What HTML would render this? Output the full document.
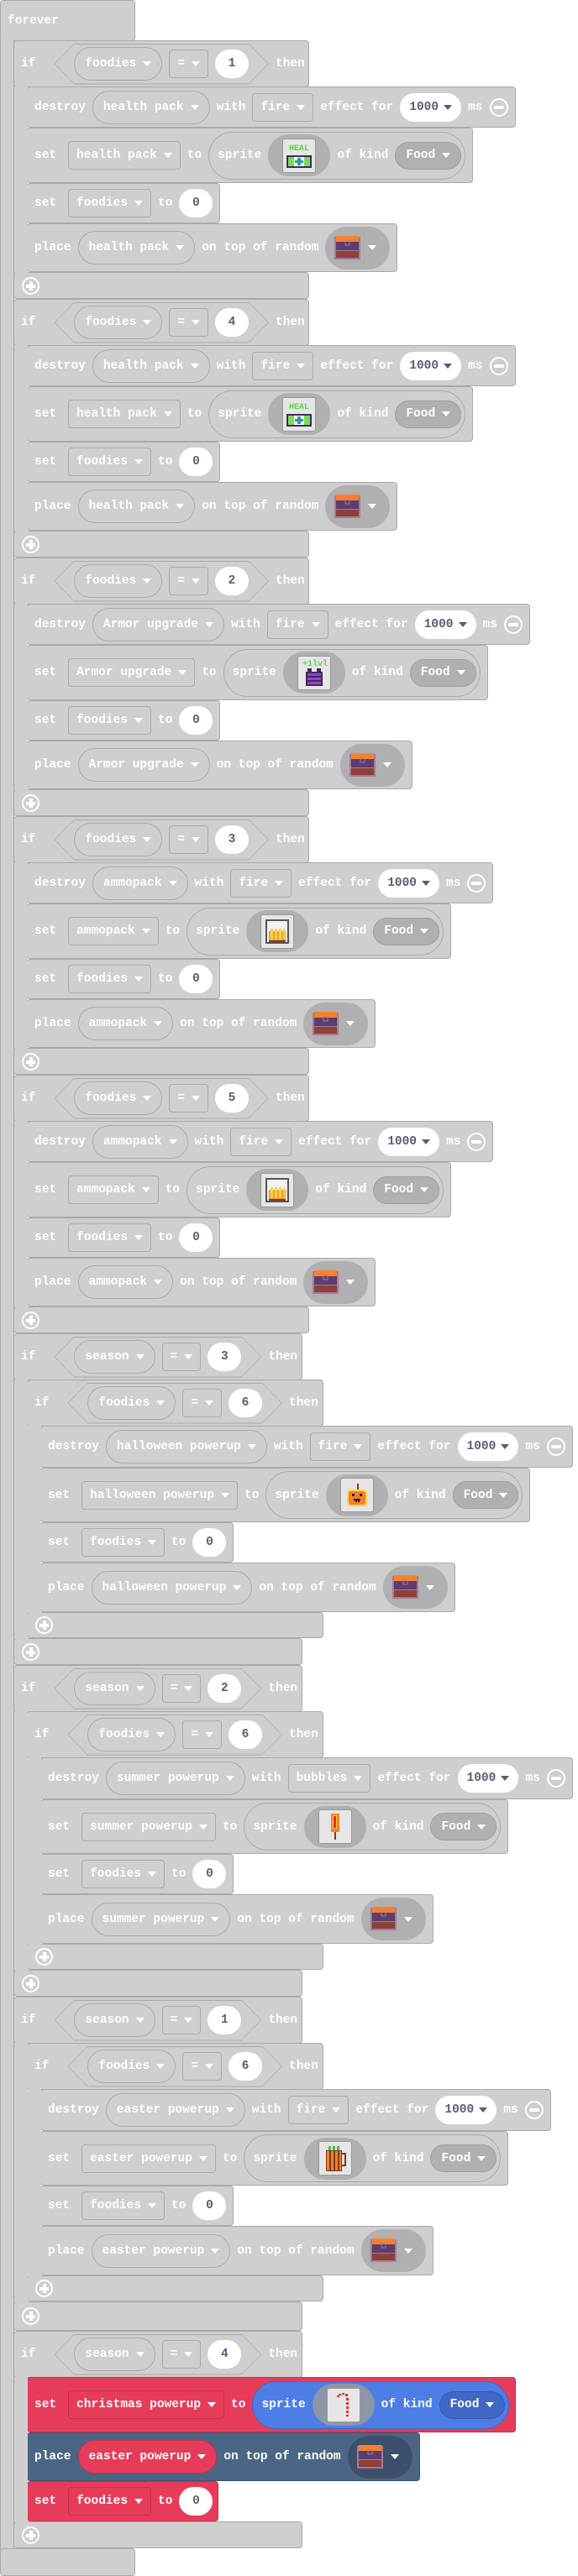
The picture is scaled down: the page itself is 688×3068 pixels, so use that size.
<!DOCTYPE html>
<html><head><meta charset="utf-8">
<style>
body{margin:0;width:688px;height:3068px;position:relative;background:#fff;overflow:hidden;font:bold 14.5px "Liberation Mono",monospace;color:#fff}
.g{position:absolute;background:#cfcfcf;border:1px solid #a9a9a9;box-sizing:border-box;border-radius:4px}
.sp1{border-top:none;border-bottom:none;border-radius:0;border-right:none}
.r{position:absolute;display:flex;align-items:center;gap:8px;padding:0 8px;box-sizing:border-box;background:#cfcfcf;border:1px solid #a9a9a9;border-radius:4px;white-space:nowrap}
.p{display:flex;align-items:center;gap:8px;height:40px;padding:0 12px;border:1px solid #a9a9a9;border-radius:20px;box-sizing:border-box}
.d{display:flex;align-items:center;gap:8px;height:34px;padding:0 9px;border:1px solid #a9a9a9;border-radius:4px;box-sizing:border-box}
.sv{margin-left:6px}
.n{display:flex;align-items:center;justify-content:center;gap:6px;height:34px;min-width:40px;padding:0 11px;background:#fff;color:#575e75;border-radius:17px;box-sizing:border-box}
.a{width:0;height:0;border-left:5px solid transparent;border-right:5px solid transparent;border-top:6px solid #fff}
.n .a{border-top-color:#575e75}
.m{width:22px;height:22px;border:2px solid #fff;border-radius:50%;box-sizing:border-box;position:relative}
.m::after{content:"";position:absolute;left:3px;right:3px;top:7px;height:4px;background:#fff;border-radius:2px}
.s{display:flex;align-items:center;gap:8px;height:57px;padding:0 4px 0 10px;border:1px solid #a9a9a9;border-radius:29px;box-sizing:border-box}
.h{display:flex;align-items:center;justify-content:center;width:74px;height:50px;border-radius:25px;background:#b0b0b0}
.ic{width:40px;height:41px;background:#e6e6e6;border:1px solid #999;border-radius:3px;box-sizing:border-box;display:flex;align-items:center;justify-content:center}
.fk{display:flex;align-items:center;gap:8px;height:33px;padding:0 12px;background:#b0b0b0;border:1px solid #9d9d9d;border-radius:17px;box-sizing:border-box}
.ch{display:flex;align-items:center;gap:8px;width:77px;height:51px;padding-left:10px;border-radius:26px;background:#b0b0b0;box-sizing:border-box}
.hx{position:relative;z-index:0;display:flex;align-items:center;gap:8px;height:49px;padding:0 24px}
.hx::before,.hx::after{content:"";position:absolute;inset:0;clip-path:polygon(24px 0,calc(100% - 24px) 0,100% 50%,calc(100% - 24px) 100%,24px 100%,0 50%);z-index:-1}
.hx::before{background:#a9a9a9}
.hx::after{inset:1px;background:#cfcfcf;clip-path:polygon(23px 0,calc(100% - 23px) 0,100% 50%,calc(100% - 23px) 100%,23px 100%,0 50%)}
.pl{position:absolute;width:21px;height:21px;border:2px solid #fff;border-radius:50%;box-sizing:border-box}
.pl::before{content:"";position:absolute;left:3px;right:3px;top:6.5px;height:4px;background:#fff}
.pl::after{content:"";position:absolute;top:3px;bottom:3px;left:6.5px;width:4px;background:#fff}
.red{background:#e63c5a;border-color:#c4304b}
.red .d{border-color:#c4304b}
.blue{background:#4d7ee6;border-color:#3e67c4}
.blue .h{background:#8d96a6}
.blue .fk{background:#3f67c6;border-color:#3558b0}
.dk{background:#4b6585;border-color:#3e5470}
.dk .p{background:#e63c5a;border-color:#c4304b}
.dk .ch{background:#3d506b}
</style></head><body>

<!-- forever -->
<div class="r" style="left:0;top:0;width:161px;height:49px">forever</div>
<div class="g" style="left:0;top:47px;width:17px;height:2990px;border-top:none;border-bottom:none;border-radius:0"></div>
<div class="g" style="left:0;top:3035px;width:161px;height:33px"></div>

<!-- ===== foodies block 1 (T=48) ===== -->
<div class="r" style="left:16px;top:48px;width:352px;height:56px">if<div class="hx" style="margin-left:14px"><div class="p">foodies<i class="a"></i></div><div class="d">=<i class="a"></i></div><div class="n">1</div></div>then</div>
<div class="r" style="left:32px;top:103px;height:49px">destroy<div class="p">health pack<i class="a"></i></div>with<div class="d">fire<i class="a"></i></div>effect for<div class="n">1000<i class="a"></i></div>ms<div class="m"></div></div>
<div class="r" style="left:32px;top:152px;height:66px">set<div class="d sv">health pack<i class="a"></i></div>to<div class="s">sprite<div class="h"><div class="ic"><svg width="32" height="35" viewBox="0 0 32 35"><text x="16" y="11" font-family="Liberation Mono" font-size="10" font-weight="bold" fill="#5ad442" text-anchor="middle">HEAL</text><rect x="1" y="17" width="30" height="15" fill="#3f2a5c"/><rect x="3" y="19" width="26" height="11" fill="#7ed957"/><rect x="10" y="19" width="12" height="11" fill="#fff"/><rect x="14" y="20" width="4" height="9" fill="#2a9d9d"/><rect x="11" y="23" width="10" height="3" fill="#2a9d9d"/></svg></div></div>of kind<div class="fk">Food<i class="a"></i></div></div></div>
<div class="r" style="left:32px;top:218px;height:48px">set<div class="d sv">foodies<i class="a"></i></div>to<div class="n">0</div></div>
<div class="r" style="left:32px;top:266px;height:58px">place<div class="p">health pack<i class="a"></i></div>on top of random<div class="ch"><svg width="33" height="31" viewBox="0 0 33 31"><rect x="1" y="2" width="31" height="27" fill="#a27b9c"/><rect x="3" y="1" width="27" height="7" fill="#f7802c"/><rect x="3" y="8" width="27" height="10" fill="#5b3d6f"/><rect x="3" y="19" width="27" height="8" fill="#903f36"/><rect x="14" y="7" width="5" height="5" fill="none" stroke="#a27b9c"/></svg><i class="a"></i></div></div>
<div class="g" style="left:16px;top:324px;width:352px;height:32px"></div>
<div class="g sp1" style="left:16px;top:103px;width:17px;height:222px"></div>
<div class="pl" style="left:26px;top:330px"></div>

<!-- ===== foodies block 2 (T=356) ===== -->
<div class="r" style="left:16px;top:356px;width:352px;height:56px">if<div class="hx" style="margin-left:14px"><div class="p">foodies<i class="a"></i></div><div class="d">=<i class="a"></i></div><div class="n">4</div></div>then</div>
<div class="r" style="left:32px;top:411px;height:49px">destroy<div class="p">health pack<i class="a"></i></div>with<div class="d">fire<i class="a"></i></div>effect for<div class="n">1000<i class="a"></i></div>ms<div class="m"></div></div>
<div class="r" style="left:32px;top:460px;height:66px">set<div class="d sv">health pack<i class="a"></i></div>to<div class="s">sprite<div class="h"><div class="ic"><svg width="32" height="35" viewBox="0 0 32 35"><text x="16" y="11" font-family="Liberation Mono" font-size="10" font-weight="bold" fill="#5ad442" text-anchor="middle">HEAL</text><rect x="1" y="17" width="30" height="15" fill="#3f2a5c"/><rect x="3" y="19" width="26" height="11" fill="#7ed957"/><rect x="10" y="19" width="12" height="11" fill="#fff"/><rect x="14" y="20" width="4" height="9" fill="#2a9d9d"/><rect x="11" y="23" width="10" height="3" fill="#2a9d9d"/></svg></div></div>of kind<div class="fk">Food<i class="a"></i></div></div></div>
<div class="r" style="left:32px;top:526px;height:48px">set<div class="d sv">foodies<i class="a"></i></div>to<div class="n">0</div></div>
<div class="r" style="left:32px;top:574px;height:58px">place<div class="p">health pack<i class="a"></i></div>on top of random<div class="ch"><svg width="33" height="31" viewBox="0 0 33 31"><rect x="1" y="2" width="31" height="27" fill="#a27b9c"/><rect x="3" y="1" width="27" height="7" fill="#f7802c"/><rect x="3" y="8" width="27" height="10" fill="#5b3d6f"/><rect x="3" y="19" width="27" height="8" fill="#903f36"/><rect x="14" y="7" width="5" height="5" fill="none" stroke="#a27b9c"/></svg><i class="a"></i></div></div>
<div class="g" style="left:16px;top:632px;width:352px;height:32px"></div>
<div class="g sp1" style="left:16px;top:411px;width:17px;height:222px"></div>
<div class="pl" style="left:26px;top:638px"></div>

<!-- ===== foodies block 3 (T=664) ===== -->
<div class="r" style="left:16px;top:664px;width:352px;height:56px">if<div class="hx" style="margin-left:14px"><div class="p">foodies<i class="a"></i></div><div class="d">=<i class="a"></i></div><div class="n">2</div></div>then</div>
<div class="r" style="left:32px;top:719px;height:49px">destroy<div class="p">Armor upgrade<i class="a"></i></div>with<div class="d">fire<i class="a"></i></div>effect for<div class="n">1000<i class="a"></i></div>ms<div class="m"></div></div>
<div class="r" style="left:32px;top:768px;height:66px">set<div class="d sv">Armor upgrade<i class="a"></i></div>to<div class="s">sprite<div class="h"><div class="ic"><svg width="32" height="36" viewBox="0 0 32 36"><text x="17" y="10" font-family="Liberation Mono" font-size="10" font-weight="bold" fill="#5ad442" text-anchor="middle">+1lvl</text><rect x="8" y="13" width="5" height="5" fill="#3f2a5c"/><rect x="19" y="13" width="5" height="5" fill="#3f2a5c"/><rect x="6" y="17" width="20" height="17" fill="#3f2a5c"/><rect x="8" y="19" width="16" height="3" fill="#9b3fd0"/><rect x="8" y="24" width="16" height="3" fill="#9b3fd0"/><rect x="8" y="29" width="16" height="3" fill="#9b3fd0"/></svg></div></div>of kind<div class="fk">Food<i class="a"></i></div></div></div>
<div class="r" style="left:32px;top:834px;height:48px">set<div class="d sv">foodies<i class="a"></i></div>to<div class="n">0</div></div>
<div class="r" style="left:32px;top:882px;height:58px">place<div class="p">Armor upgrade<i class="a"></i></div>on top of random<div class="ch"><svg width="33" height="31" viewBox="0 0 33 31"><rect x="1" y="2" width="31" height="27" fill="#a27b9c"/><rect x="3" y="1" width="27" height="7" fill="#f7802c"/><rect x="3" y="8" width="27" height="10" fill="#5b3d6f"/><rect x="3" y="19" width="27" height="8" fill="#903f36"/><rect x="14" y="7" width="5" height="5" fill="none" stroke="#a27b9c"/></svg><i class="a"></i></div></div>
<div class="g" style="left:16px;top:940px;width:352px;height:32px"></div>
<div class="g sp1" style="left:16px;top:719px;width:17px;height:222px"></div>
<div class="pl" style="left:26px;top:946px"></div>

<!-- ===== foodies block 4 (T=972) ===== -->
<div class="r" style="left:16px;top:972px;width:352px;height:56px">if<div class="hx" style="margin-left:14px"><div class="p">foodies<i class="a"></i></div><div class="d">=<i class="a"></i></div><div class="n">3</div></div>then</div>
<div class="r" style="left:32px;top:1027px;height:49px">destroy<div class="p">ammopack<i class="a"></i></div>with<div class="d">fire<i class="a"></i></div>effect for<div class="n">1000<i class="a"></i></div>ms<div class="m"></div></div>
<div class="r" style="left:32px;top:1076px;height:66px">set<div class="d sv">ammopack<i class="a"></i></div>to<div class="s">sprite<div class="h"><div class="ic"><svg width="32" height="34" viewBox="0 0 32 34"><rect x="3" y="4" width="26" height="27" fill="#f2f2f2" stroke="#555" stroke-width="2"/><rect x="6" y="17" width="20" height="12" fill="#f59a2c"/><rect x="8" y="14" width="3" height="13" fill="#f7d44c"/><rect x="13" y="14" width="3" height="13" fill="#f7d44c"/><rect x="18" y="14" width="3" height="13" fill="#f7d44c"/><rect x="23" y="14" width="2" height="13" fill="#f7d44c"/><rect x="6" y="28" width="20" height="2" fill="#7a3b1f"/></svg></div></div>of kind<div class="fk">Food<i class="a"></i></div></div></div>
<div class="r" style="left:32px;top:1142px;height:48px">set<div class="d sv">foodies<i class="a"></i></div>to<div class="n">0</div></div>
<div class="r" style="left:32px;top:1190px;height:58px">place<div class="p">ammopack<i class="a"></i></div>on top of random<div class="ch"><svg width="33" height="31" viewBox="0 0 33 31"><rect x="1" y="2" width="31" height="27" fill="#a27b9c"/><rect x="3" y="1" width="27" height="7" fill="#f7802c"/><rect x="3" y="8" width="27" height="10" fill="#5b3d6f"/><rect x="3" y="19" width="27" height="8" fill="#903f36"/><rect x="14" y="7" width="5" height="5" fill="none" stroke="#a27b9c"/></svg><i class="a"></i></div></div>
<div class="g" style="left:16px;top:1248px;width:352px;height:32px"></div>
<div class="g sp1" style="left:16px;top:1027px;width:17px;height:222px"></div>
<div class="pl" style="left:26px;top:1254px"></div>

<!-- ===== foodies block 5 (T=1280) ===== -->
<div class="r" style="left:16px;top:1280px;width:352px;height:56px">if<div class="hx" style="margin-left:14px"><div class="p">foodies<i class="a"></i></div><div class="d">=<i class="a"></i></div><div class="n">5</div></div>then</div>
<div class="r" style="left:32px;top:1335px;height:49px">destroy<div class="p">ammopack<i class="a"></i></div>with<div class="d">fire<i class="a"></i></div>effect for<div class="n">1000<i class="a"></i></div>ms<div class="m"></div></div>
<div class="r" style="left:32px;top:1384px;height:66px">set<div class="d sv">ammopack<i class="a"></i></div>to<div class="s">sprite<div class="h"><div class="ic"><svg width="32" height="34" viewBox="0 0 32 34"><rect x="3" y="4" width="26" height="27" fill="#f2f2f2" stroke="#555" stroke-width="2"/><rect x="6" y="17" width="20" height="12" fill="#f59a2c"/><rect x="8" y="14" width="3" height="13" fill="#f7d44c"/><rect x="13" y="14" width="3" height="13" fill="#f7d44c"/><rect x="18" y="14" width="3" height="13" fill="#f7d44c"/><rect x="23" y="14" width="2" height="13" fill="#f7d44c"/><rect x="6" y="28" width="20" height="2" fill="#7a3b1f"/></svg></div></div>of kind<div class="fk">Food<i class="a"></i></div></div></div>
<div class="r" style="left:32px;top:1450px;height:48px">set<div class="d sv">foodies<i class="a"></i></div>to<div class="n">0</div></div>
<div class="r" style="left:32px;top:1498px;height:58px">place<div class="p">ammopack<i class="a"></i></div>on top of random<div class="ch"><svg width="33" height="31" viewBox="0 0 33 31"><rect x="1" y="2" width="31" height="27" fill="#a27b9c"/><rect x="3" y="1" width="27" height="7" fill="#f7802c"/><rect x="3" y="8" width="27" height="10" fill="#5b3d6f"/><rect x="3" y="19" width="27" height="8" fill="#903f36"/><rect x="14" y="7" width="5" height="5" fill="none" stroke="#a27b9c"/></svg><i class="a"></i></div></div>
<div class="g" style="left:16px;top:1556px;width:352px;height:32px"></div>
<div class="g sp1" style="left:16px;top:1335px;width:17px;height:222px"></div>
<div class="pl" style="left:26px;top:1562px"></div>

<!-- ===== season block 3 (S=1588) ===== -->
<div class="r" style="left:16px;top:1588px;width:344px;height:56px">if<div class="hx" style="margin-left:14px"><div class="p">season<i class="a"></i></div><div class="d">=<i class="a"></i></div><div class="n">3</div></div>then</div>
<div class="r" style="left:32px;top:1643px;width:353px;height:56px">if<div class="hx" style="margin-left:14px"><div class="p">foodies<i class="a"></i></div><div class="d">=<i class="a"></i></div><div class="n">6</div></div>then</div>
<div class="r" style="left:48px;top:1698px;height:50px">destroy<div class="p">halloween powerup<i class="a"></i></div>with<div class="d">fire<i class="a"></i></div>effect for<div class="n">1000<i class="a"></i></div>ms<div class="m"></div></div>
<div class="r" style="left:48px;top:1748px;height:65px">set<div class="d sv">halloween powerup<i class="a"></i></div>to<div class="s">sprite<div class="h"><div class="ic"><svg width="32" height="34" viewBox="0 0 32 34"><rect x="16" y="3" width="2" height="7" fill="#7a3b1f"/><rect x="4" y="10" width="24" height="20" rx="4" fill="#f7d44c"/><rect x="6" y="12" width="20" height="16" rx="3" fill="#f5802a"/><rect x="10" y="15" width="3" height="3" fill="#222"/><rect x="19" y="15" width="3" height="3" fill="#222"/><rect x="12" y="21" width="8" height="2" fill="#222"/><rect x="14" y="23" width="2" height="2" fill="#222"/><rect x="17" y="23" width="2" height="2" fill="#222"/></svg></div></div>of kind<div class="fk">Food<i class="a"></i></div></div></div>
<div class="r" style="left:48px;top:1813px;height:48px">set<div class="d sv">foodies<i class="a"></i></div>to<div class="n">0</div></div>
<div class="r" style="left:48px;top:1861px;height:59px">place<div class="p">halloween powerup<i class="a"></i></div>on top of random<div class="ch"><svg width="33" height="31" viewBox="0 0 33 31"><rect x="1" y="2" width="31" height="27" fill="#a27b9c"/><rect x="3" y="1" width="27" height="7" fill="#f7802c"/><rect x="3" y="8" width="27" height="10" fill="#5b3d6f"/><rect x="3" y="19" width="27" height="8" fill="#903f36"/><rect x="14" y="7" width="5" height="5" fill="none" stroke="#a27b9c"/></svg><i class="a"></i></div></div>
<div class="g" style="left:32px;top:1920px;width:353px;height:31px"></div>
<div class="g sp1" style="left:32px;top:1698px;width:17px;height:223px"></div>
<div class="pl" style="left:42px;top:1925px"></div>
<div class="g" style="left:16px;top:1951px;width:344px;height:32px"></div>
<div class="g sp1" style="left:16px;top:1643px;width:17px;height:309px"></div>
<div class="pl" style="left:26px;top:1957px"></div>

<!-- ===== season block 2 (S=1983) ===== -->
<div class="r" style="left:16px;top:1983px;width:344px;height:56px">if<div class="hx" style="margin-left:14px"><div class="p">season<i class="a"></i></div><div class="d">=<i class="a"></i></div><div class="n">2</div></div>then</div>
<div class="r" style="left:32px;top:2038px;width:353px;height:56px">if<div class="hx" style="margin-left:14px"><div class="p">foodies<i class="a"></i></div><div class="d">=<i class="a"></i></div><div class="n">6</div></div>then</div>
<div class="r" style="left:48px;top:2093px;height:50px">destroy<div class="p">summer powerup<i class="a"></i></div>with<div class="d">bubbles<i class="a"></i></div>effect for<div class="n">1000<i class="a"></i></div>ms<div class="m"></div></div>
<div class="r" style="left:48px;top:2143px;height:65px">set<div class="d sv">summer powerup<i class="a"></i></div>to<div class="s">sprite<div class="h"><div class="ic"><svg width="32" height="36" viewBox="0 0 32 36"><rect x="11" y="2" width="10" height="22" fill="#f5802a"/><rect x="13" y="4" width="5" height="16" fill="#f7d44c"/><rect x="14" y="5" width="3" height="14" fill="#e0302a"/><rect x="15" y="24" width="2" height="9" fill="#7a3b1f"/></svg></div></div>of kind<div class="fk">Food<i class="a"></i></div></div></div>
<div class="r" style="left:48px;top:2208px;height:48px">set<div class="d sv">foodies<i class="a"></i></div>to<div class="n">0</div></div>
<div class="r" style="left:48px;top:2256px;height:59px">place<div class="p">summer powerup<i class="a"></i></div>on top of random<div class="ch"><svg width="33" height="31" viewBox="0 0 33 31"><rect x="1" y="2" width="31" height="27" fill="#a27b9c"/><rect x="3" y="1" width="27" height="7" fill="#f7802c"/><rect x="3" y="8" width="27" height="10" fill="#5b3d6f"/><rect x="3" y="19" width="27" height="8" fill="#903f36"/><rect x="14" y="7" width="5" height="5" fill="none" stroke="#a27b9c"/></svg><i class="a"></i></div></div>
<div class="g" style="left:32px;top:2315px;width:353px;height:31px"></div>
<div class="g sp1" style="left:32px;top:2093px;width:17px;height:223px"></div>
<div class="pl" style="left:42px;top:2320px"></div>
<div class="g" style="left:16px;top:2346px;width:344px;height:32px"></div>
<div class="g sp1" style="left:16px;top:2038px;width:17px;height:309px"></div>
<div class="pl" style="left:26px;top:2352px"></div>

<!-- ===== season block 1 (S=2378) ===== -->
<div class="r" style="left:16px;top:2378px;width:344px;height:56px">if<div class="hx" style="margin-left:14px"><div class="p">season<i class="a"></i></div><div class="d">=<i class="a"></i></div><div class="n">1</div></div>then</div>
<div class="r" style="left:32px;top:2433px;width:353px;height:56px">if<div class="hx" style="margin-left:14px"><div class="p">foodies<i class="a"></i></div><div class="d">=<i class="a"></i></div><div class="n">6</div></div>then</div>
<div class="r" style="left:48px;top:2488px;height:50px">destroy<div class="p">easter powerup<i class="a"></i></div>with<div class="d">fire<i class="a"></i></div>effect for<div class="n">1000<i class="a"></i></div>ms<div class="m"></div></div>
<div class="r" style="left:48px;top:2538px;height:65px">set<div class="d sv">easter powerup<i class="a"></i></div>to<div class="s">sprite<div class="h"><div class="ic"><svg width="32" height="36" viewBox="0 0 32 36"><rect x="8" y="3" width="3" height="5" fill="#3fbf5a"/><rect x="13" y="3" width="3" height="5" fill="#3fbf5a"/><rect x="18" y="3" width="3" height="5" fill="#3fbf5a"/><rect x="5" y="8" width="19" height="25" fill="#7a3b1f"/><rect x="6" y="9" width="3" height="23" fill="#f5802a"/><rect x="11" y="9" width="3" height="23" fill="#f5802a"/><rect x="16" y="9" width="3" height="23" fill="#f5802a"/><rect x="21" y="9" width="2" height="23" fill="#f5802a"/><path d="M24 12h4v14h-4" fill="none" stroke="#7a3b1f" stroke-width="2"/></svg></div></div>of kind<div class="fk">Food<i class="a"></i></div></div></div>
<div class="r" style="left:48px;top:2603px;height:48px">set<div class="d sv">foodies<i class="a"></i></div>to<div class="n">0</div></div>
<div class="r" style="left:48px;top:2651px;height:59px">place<div class="p">easter powerup<i class="a"></i></div>on top of random<div class="ch"><svg width="33" height="31" viewBox="0 0 33 31"><rect x="1" y="2" width="31" height="27" fill="#a27b9c"/><rect x="3" y="1" width="27" height="7" fill="#f7802c"/><rect x="3" y="8" width="27" height="10" fill="#5b3d6f"/><rect x="3" y="19" width="27" height="8" fill="#903f36"/><rect x="14" y="7" width="5" height="5" fill="none" stroke="#a27b9c"/></svg><i class="a"></i></div></div>
<div class="g" style="left:32px;top:2710px;width:353px;height:31px"></div>
<div class="g sp1" style="left:32px;top:2488px;width:17px;height:223px"></div>
<div class="pl" style="left:42px;top:2715px"></div>
<div class="g" style="left:16px;top:2741px;width:344px;height:35px"></div>
<div class="g sp1" style="left:16px;top:2433px;width:17px;height:309px"></div>
<div class="pl" style="left:26px;top:2748px"></div>

<!-- ===== season block 4 (S=2776) ===== -->
<div class="r" style="left:16px;top:2776px;width:344px;height:56px">if<div class="hx" style="margin-left:14px"><div class="p">season<i class="a"></i></div><div class="d">=<i class="a"></i></div><div class="n">4</div></div>then</div>
<div class="r red" style="left:32px;top:2831px;width:582px;height:66px">set<div class="d sv">christmas powerup<i class="a"></i></div>to<div class="s blue">sprite<div class="h"><div class="ic"><svg width="32" height="36" viewBox="0 0 32 36"><rect x="10" y="5" width="3" height="2" fill="#e0302a"/><rect x="8" y="7" width="3" height="2" fill="#e0302a"/><rect x="14" y="4" width="3" height="2" fill="#e0302a"/><rect x="18" y="5" width="3" height="3" fill="#e0302a"/><rect x="19" y="10" width="3" height="3" fill="#e0302a"/><rect x="19" y="15" width="3" height="3" fill="#e0302a"/><rect x="19" y="20" width="3" height="3" fill="#e0302a"/><rect x="19" y="25" width="3" height="3" fill="#e0302a"/><rect x="19" y="30" width="3" height="2" fill="#e0302a"/></svg></div></div>of kind<div class="fk">Food<i class="a"></i></div></div></div>
<div class="r dk" style="left:32px;top:2897px;width:468px;height:58px">place<div class="p">easter powerup<i class="a"></i></div>on top of random<div class="ch"><svg width="33" height="31" viewBox="0 0 33 31"><rect x="1" y="2" width="31" height="27" fill="#a27b9c"/><rect x="3" y="1" width="27" height="7" fill="#f7802c"/><rect x="3" y="8" width="27" height="10" fill="#5b3d6f"/><rect x="3" y="19" width="27" height="8" fill="#903f36"/><rect x="14" y="7" width="5" height="5" fill="none" stroke="#a27b9c"/></svg><i class="a"></i></div></div>
<div class="r red" style="left:32px;top:2955px;width:228px;height:48px">set<div class="d sv">foodies<i class="a"></i></div>to<div class="n">0</div></div>
<div class="g" style="left:16px;top:3003px;width:344px;height:32px"></div>
<div class="g sp1" style="left:16px;top:2831px;width:17px;height:173px"></div>
<div class="pl" style="left:26px;top:3009px"></div>

</body></html>
